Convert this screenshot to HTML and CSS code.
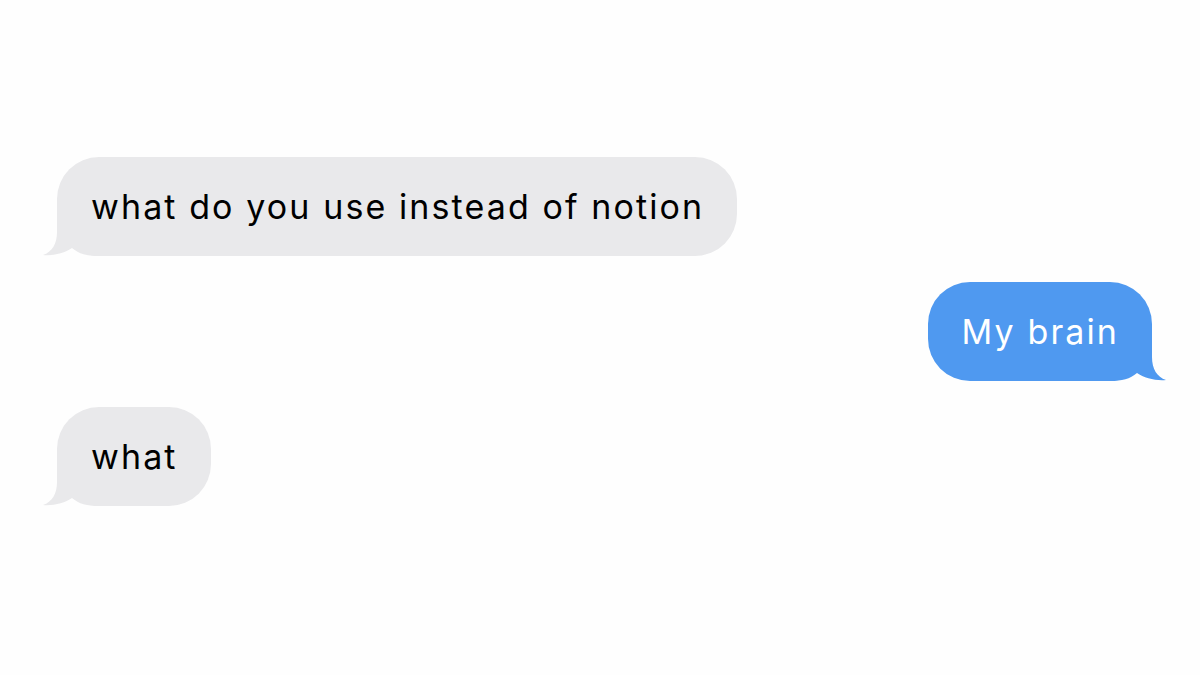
FILE: index.html
```html
<!DOCTYPE html>
<html>
<head>
<meta charset="utf-8">
<link rel="stylesheet" href="styles.css">
</head>
<body>
<main class="thread">
  <div class="msg msg-in">
    <div class="bubble bubble-in">
      <svg class="tail tail-in" viewBox="-16 -50 64 50" width="64" height="50"><path d="M0,-50 L0,-24 C0,-12 -5,-4 -14,-1 C-4,0 8,-3 15,-8 C22,-2 30,0 42,0 L48,0 L48,-50 Z"/></svg>
      <span class="text">what do you use instead of notion</span>
    </div>
  </div>
  <div class="msg msg-out">
    <div class="bubble bubble-out">
      <svg class="tail tail-out" viewBox="-16 -50 64 50" width="64" height="50"><path d="M0,-50 L0,-24 C0,-12 -5,-4 -14,-1 C-4,0 8,-3 15,-8 C22,-2 30,0 42,0 L48,0 L48,-50 Z"/></svg>
      <span class="text">My brain</span>
    </div>
  </div>
  <div class="msg msg-in">
    <div class="bubble bubble-in">
      <svg class="tail tail-in" viewBox="-16 -50 64 50" width="64" height="50"><path d="M0,-50 L0,-24 C0,-12 -5,-4 -14,-1 C-4,0 8,-3 15,-8 C22,-2 30,0 42,0 L48,0 L48,-50 Z"/></svg>
      <span class="text">what</span>
    </div>
  </div>
</main>
</body>
</html>
```
FILE: styles.css
```css
html, body {
  margin: 0;
  padding: 0;
  background: #fefefe;
}
body {
  width: 1200px;
  height: 675px;
  overflow: hidden;
  font-family: "Inter", "Noto Sans", sans-serif;
}
.thread {
  display: flex;
  flex-direction: column;
  gap: 26px;
  padding: 157px 48px 0 57px;
}
.msg {
  display: flex;
}
.msg-in { justify-content: flex-start; }
.msg-out { justify-content: flex-end; }
.bubble {
  position: relative;
  font-size: 34px;
  line-height: 43px;
  letter-spacing: 2.1px;
  padding: 28px 33px 28px 34px;
  border-radius: 42px;
  white-space: nowrap;
}
.text {
  position: relative;
  z-index: 1;
}
.bubble-in {
  background: #e9e9eb;
  color: #000;
}
.bubble-out {
  background: #4f99f0;
  color: #fff;
}
.tail {
  position: absolute;
  bottom: 0;
  display: block;
}
.tail-in {
  left: -16px;
  fill: #e9e9eb;
}
.tail-out {
  right: -16px;
  fill: #4f99f0;
  transform: scaleX(-1);
}
```
